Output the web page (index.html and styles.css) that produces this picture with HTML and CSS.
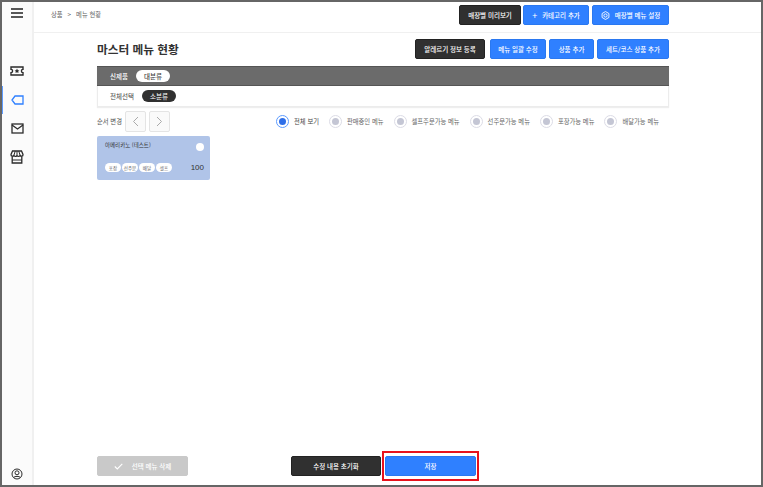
FILE: index.html
```html
<!DOCTYPE html>
<html lang="ko">
<head>
<meta charset="utf-8">
<title>마스터 메뉴 현황</title>
<link rel="stylesheet" href="styles.css">
</head>
<body>
<div class="frame">
  <aside class="sidebar">
    <button class="menu-btn" aria-label="메뉴">
      <svg width="14" height="10" viewBox="0 0 14 10"><path d="M1 1h12M1 5h12M1 9h12" stroke="#222" stroke-width="1.4" fill="none"/></svg>
    </button>
    <nav class="side-nav">
      <div class="side-item">
        <svg width="14" height="12" viewBox="0 0 14 12" fill="none" stroke="#2b2b2b" stroke-width="1.4"><path d="M1 2h12v2.4a1.6 1.6 0 0 0 0 3.2V10H1V7.6a1.6 1.6 0 0 0 0-3.2z"/><path d="M7 3.6l.8 1.6 1.6.2-1.2 1.1.3 1.6L7 7.3l-1.500.8.300-1.600-1.200-1.100 1.600-.2z" fill="#2b2b2b" stroke="none"/></svg>
      </div>
      <div class="side-item active">
        <svg width="13" height="10" viewBox="0 0 13 10" fill="none" stroke="#2f80ff" stroke-width="1.3"><path d="M4 1h8v8H4L1 5z"/></svg>
      </div>
      <div class="side-item">
        <svg width="13" height="11" viewBox="0 0 13 11" fill="none" stroke="#2b2b2b" stroke-width="1.3"><rect x="1" y="1" width="11" height="9"/><path d="M1 2l5.500 4L12 2"/></svg>
      </div>
      <div class="side-item">
        <svg width="14" height="14" viewBox="0 0 14 14" fill="none" stroke="#2b2b2b" stroke-width="1.300"><path d="M2.200 6.500V13h9.600V6.500"/><path d="M2.200 10h9.600" stroke-width="1"/><path d="M2.500 1h9l1.500 3.500a1.500 1.500 0 0 1-3 .4 1.500 1.500 0 0 1-3 0 1.500 1.500 0 0 1-3 0 1.500 1.500 0 0 1-3-.4z"/><path d="M5.200 1.200L4 5M8.800 1.200L10 5M7 1.200V5" stroke-width="1"/></svg>
      </div>
    </nav>
    <div class="side-foot">
      <svg width="12" height="12" viewBox="0 0 12 12" fill="none" stroke="#2b2b2b" stroke-width="1"><circle cx="6" cy="6" r="5"/><circle cx="6" cy="4.800" r="2"/><path d="M2.600 9.500c1-1.500 5.800-1.500 6.800 0"/></svg>
    </div>
  </aside>
  <div class="main">
    <header class="topbar">
      <div class="crumbs"><span>상품</span><span class="crumb-sep">&gt;</span><span>메뉴 현황</span></div>
      <div class="btn-group top-actions">
        <button class="btn dark w-preview">매장별 미리보기</button>
        <button class="btn blue w-cat"><span class="plus">+</span>카테고리 추가</button>
        <button class="btn blue w-set">
          <svg width="9" height="9" viewBox="0 0 10 10" fill="none" stroke="#fff"><path d="M5 .6L8.800 2.800v4.400L5 9.400 1.200 7.200V2.800z"/><circle cx="5" cy="5" r="1.800"/></svg>
          매장별 메뉴 설정</button>
      </div>
    </header>
    <section class="content">
      <div class="title-row">
        <h1>마스터 메뉴 현황</h1>
        <div class="btn-group tools">
          <button class="btn dark w-allergy">알레르기 정보 등록</button>
          <button class="btn blue w-bulk">메뉴 일괄 수정</button>
          <button class="btn blue w-add">상품 추가</button>
          <button class="btn blue w-course">세트/코스 상품 추가</button>
        </div>
      </div>
      <div class="tabs">
        <div class="tab-row major"><span>신제품</span><span class="pill light">대분류</span></div>
        <div class="tab-row minor"><span>전체선택</span><span class="pill dark-pill">소분류</span></div>
      </div>
      <div class="filter-row">
        <div class="order">
          <span>순서 변경</span>
          <button class="arrow" aria-label="이전"><svg width="7" height="11" viewBox="0 0 7 11" fill="none" stroke="#aaa"><path d="M6 1L1.500 5.500 6 10"/></svg></button>
          <button class="arrow" aria-label="다음"><svg width="7" height="11" viewBox="0 0 7 11" fill="none" stroke="#aaa"><path d="M1 1l4.500 4.500L1 10"/></svg></button>
        </div>
        <div class="radios">
          <label class="radio on"><i></i>전체 보기</label>
          <label class="radio"><i></i>판매중인 메뉴</label>
          <label class="radio"><i></i>셀프주문가능 메뉴</label>
          <label class="radio"><i></i>선주문가능 메뉴</label>
          <label class="radio"><i></i>포장가능 메뉴</label>
          <label class="radio"><i></i>배달가능 메뉴</label>
        </div>
      </div>
      <article class="card">
        <div class="card-top"><span>아메리카노 (테스트)</span><i class="dot"></i></div>
        <div class="card-bottom">
          <div class="chips"><span>포장</span><span>선주문</span><span>배달</span><span>셀프</span></div>
          <span class="qty">100</span>
        </div>
      </article>
      <footer class="bottom">
        <button class="btn gray w-del">
          <svg width="9" height="7" viewBox="0 0 9 7" fill="none" stroke="#fff" stroke-width="1.100"><path d="M.8 3.500L3.300 6 8.300.8"/></svg>
          선택 메뉴 삭제</button>
        <button class="btn dark w-reset">수정 내용 초기화</button>
        <div class="highlight"><button class="btn blue w-save">저장</button></div>
      </footer>
    </section>
  </div>
</div>
</body>
</html>
```

FILE: styles.css
```css
* { box-sizing: border-box; }
html, body { margin: 0; height: 100%; }
body {
  font-family: "Noto Sans CJK KR", "Noto Sans", sans-serif;
  color: #333;
  background: #fff;
}
button { font-family: inherit; cursor: pointer; }
.frame {
  width: 763px;
  height: 487px;
  display: flex;
  border: 2px solid #666;
  background: #fff;
}
.sidebar {
  width: 32px;
  flex: none;
  display: flex;
  flex-direction: column;
  align-items: center;
  background: #fbfbfb;
  border-right: 2px solid #f0f0f0;
}
.menu-btn {
  margin-top: 6px;
  width: 14px;
  height: 10px;
  padding: 0;
  border: 0;
  background: none;
  display: flex;
}
.side-nav { margin-top: 39px; width: 100%; display: flex; flex-direction: column; }
.side-item {
  height: 28.500px;
  display: flex;
  align-items: center;
  justify-content: center;
}
.side-item.active { box-shadow: inset 1px 0 0 #5c9bff; }
.side-foot { margin-top: auto; margin-bottom: 5px; display: flex; }
.main { flex: 1; min-width: 0; display: flex; flex-direction: column; }
.topbar {
  height: 31px;
  flex: none;
  display: flex;
  align-items: flex-start;
  justify-content: space-between;
  padding: 3px 92px 0 17px;
  border-bottom: 1px solid #f0f0f0;
}
.crumbs {
  display: flex;
  gap: 5px;
  font-size: 6.300px;
  line-height: 20px;
  color: #666;
}
.crumb-sep { color: #555; }
.btn-group { display: flex; }
.btn {
  height: 20px;
  padding: 0;
  border: 1px solid transparent;
  border-radius: 2px;
  font-size: 6.500px;
  font-weight: 500;
  color: #fff;
  display: flex;
  align-items: center;
  justify-content: center;
  gap: 5px;
}
.btn.dark { background: #303030; border-color: #222; }
.btn.blue { background: #2f80ff; border-color: #2a78f0; }
.btn.gray { background: #c9c9c9; border-color: #c9c9c9; }
.plus { font-size: 9px; line-height: 1; font-weight: 400; }
.top-actions { gap: 2px; }
.w-preview { width: 62px; }
.w-cat { width: 66px; margin-right: 1px; }
.w-set { width: 77px; }
.content {
  flex: 1;
  min-height: 0;
  display: flex;
  flex-direction: column;
  padding: 5px 92px 0 63px;
}
.title-row { display: flex; justify-content: space-between; align-items: center; height: 21px; }
h1 { margin: 0; font-size: 11.700px; font-weight: 700; color: #333; line-height: 20px; }
.tools { gap: 3px; }
.w-allergy { width: 70px; margin-right: 2px; }
.w-bulk { width: 56px; }
.w-add { width: 45px; }
.w-course { width: 72px; }
.tabs {
  margin-top: 7px;
  border: 1px solid #ececec;
  border-top: 0;
  box-shadow: 0 1px 1px #eee;
}
.tab-row {
  display: flex;
  align-items: center;
  gap: 8px;
  font-size: 6.500px;
}
.major {
  height: 20px;
  padding-left: 13px;
  background: #6b6b6b;
  border-top: 1px solid #555;
  border-bottom: 1px solid #555;
  margin: 0 -1px;
  color: #fff;
  font-weight: 500;
}
.minor { height: 20px; padding-left: 12px; color: #444; }
.pill {
  height: 12px;
  width: 34px;
  border-radius: 6px;
  display: flex;
  align-items: center;
  justify-content: center;
}
.pill.light { background: #fff; color: #444; }
.pill.dark-pill { background: #303030; color: #fff; margin-left: 0; }
.filter-row {
  margin-top: 3px;
  height: 22px;
  display: flex;
  align-items: center;
  justify-content: space-between;
  font-size: 6.300px;
}
.order { display: flex; align-items: center; gap: 3px; color: #555; }
.arrow {
  width: 21px;
  height: 21px;
  padding: 0;
  border: 1px solid #e4e4e4;
  border-radius: 2px;
  background: #fafafa;
  display: flex;
  align-items: center;
  justify-content: center;
}
.radios { display: flex; gap: 10px; padding-right: 10px; color: #666; }
.radio { display: flex; align-items: center; gap: 5px; white-space: nowrap; }
.radio i {
  width: 13px;
  height: 13px;
  border-radius: 50%;
  border: 1px solid #dcdce6;
  background: #fff;
  display: flex;
  align-items: center;
  justify-content: center;
}
.radio i::after {
  content: "";
  width: 7px;
  height: 7px;
  border-radius: 50%;
  background: #c4c6d4;
}
.radio.on i { border-color: #5c9bff; }
.radio.on i::after { background: #2f6fe8; }
.radio.on { color: #444; }
.card {
  margin-top: 4px;
  width: 113px;
  height: 44px;
  padding: 5px 6px 8px 8px;
  background: #b0c4e8;
  border-radius: 2px;
  display: flex;
  flex-direction: column;
  justify-content: space-between;
  color: #333;
}
.card-top { display: flex; justify-content: space-between; align-items: flex-start; font-size: 5.500px; line-height: 8px; }
.dot { width: 8px; height: 8px; border-radius: 50%; background: #fff; margin-top: 2px; }
.card-bottom { display: flex; justify-content: space-between; align-items: center; }
.chips { display: flex; gap: 1px; }
.chips span {
  width: 16px;
  height: 9px;
  border-radius: 5px;
  background: #fff;
  font-size: 4.500px;
  color: #666;
  display: flex;
  align-items: center;
  justify-content: center;
}
.qty { font-size: 8px; color: #333; font-family: "Liberation Sans", sans-serif; }
.bottom {
  margin-top: auto;
  margin-bottom: 4px;
  display: flex;
  align-items: center;
}
.w-del { width: 91px; gap: 9px; }
.w-reset { width: 90px; margin-left: 103px; }
.highlight {
  margin-left: 1px;
  padding: 3px 1px;
  border: 2px solid #e8121c;
  width: 97px;
  height: 30px;
}
.w-save { width: 91px; height: 20px; }
```
